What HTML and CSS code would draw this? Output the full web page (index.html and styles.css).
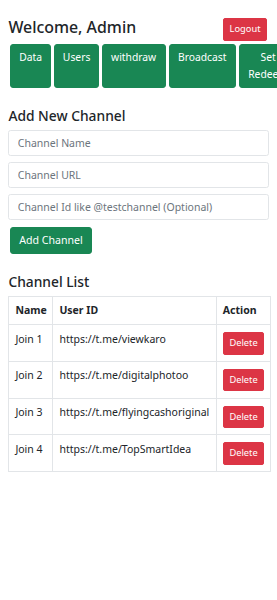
FILE: index.html
```html
<!DOCTYPE html>
<html lang="en">
<head>
  <meta charset="UTF-8" />
  <meta name="viewport" content="width=device-width, initial-scale=1.0">
  <title>Admin Panel</title>
  <link rel="stylesheet" href="styles.css">
</head>
<body>
  <div class="container">
    <div class="topbar">
      <h4 class="welcome">Welcome, Admin</h4>
      <a href="#" class="btn btn-danger btn-sm">Logout</a>
    </div>

    <div class="nav-buttons">
      <a href="#" class="btn btn-success">Data</a>
      <a href="#" class="btn btn-success btn-users">Users</a>
      <a href="#" class="btn btn-success">withdraw</a>
      <a href="#" class="btn btn-success">Broadcast</a>
      <a href="#" class="btn btn-success">Set Redeem</a>
    </div>

    <h5 class="section-title first">Add New Channel</h5>
    <form class="channel-form" onsubmit="return false;">
      <input type="text" class="form-control" placeholder="Channel Name">
      <input type="text" class="form-control" placeholder="Channel URL">
      <input type="text" class="form-control" placeholder="Channel Id like @testchannel (Optional)">
      <div>
        <button type="submit" class="btn btn-success add-btn">Add Channel</button>
      </div>
    </form>

    <h5 class="section-title">Channel List</h5>
    <table class="table">
      <colgroup>
        <col class="col-name">
        <col class="col-url">
        <col class="col-action">
      </colgroup>
      <thead>
        <tr>
          <th>Name</th>
          <th>User ID</th>
          <th>Action</th>
        </tr>
      </thead>
      <tbody>
        <tr>
          <td>Join 1</td>
          <td>https://t.me/viewkaro</td>
          <td><button class="btn btn-danger btn-sm">Delete</button></td>
        </tr>
        <tr>
          <td>Join 2</td>
          <td>https://t.me/digitalphotoo</td>
          <td><button class="btn btn-danger btn-sm">Delete</button></td>
        </tr>
        <tr>
          <td>Join 3</td>
          <td>https://t.me/flyingcashoriginal</td>
          <td><button class="btn btn-danger btn-sm">Delete</button></td>
        </tr>
        <tr>
          <td>Join 4</td>
          <td>https://t.me/TopSmartIdea</td>
          <td><button class="btn btn-danger btn-sm">Delete</button></td>
        </tr>
      </tbody>
    </table>
  </div>
</body>
</html>
```

FILE: styles.css
```css
:root {
  --text: #212529;
  --success: #198754;
  --danger: #dc3545;
  --border: #e2e5e8;
  --muted: #6c757d;
}

* {
  margin: 0;
  padding: 0;
  box-sizing: border-box;
}

body {
  font-family: "Noto Sans", "Open Sans", sans-serif;
  font-size: 10.5px;
  line-height: 16.8px;
  color: var(--text);
  background: #fff;
  overflow-x: hidden;
}

.container {
  padding: 16.8px 8.4px 20px;
}

.topbar {
  display: flex;
  justify-content: space-between;
  align-items: flex-start;
}

.welcome {
  font-size: 15.9px;
  line-height: 18px;
  font-weight: 500;
  margin-top: 1.5px;
}

.btn {
  display: inline-block;
  margin: 1.5px;
  padding: 4.1px 8.4px;
  font-family: inherit;
  font-size: 10.5px;
  line-height: 16.8px;
  color: #fff;
  text-align: center;
  text-decoration: none;
  border: 0.7px solid transparent;
  border-radius: 3px;
  cursor: pointer;
}

.btn-success {
  background: var(--success);
  border-color: var(--success);
}

.btn-danger {
  background: var(--danger);
  border-color: var(--danger);
}

.btn-sm {
  padding: 2.8px 5.6px;
  font-size: 9.3px;
  line-height: 14.7px;
  border-radius: 2px;
}

.nav-buttons {
  display: flex;
  margin-top: 0.3px;
}

.nav-buttons .btn {
  font-size: 10.3px;
  line-height: 17px;
  padding: 4.3px 8.4px;
}

.nav-buttons .btn-users {
  padding: 4.3px 7.4px;
}

.section-title {
  font-size: 13.8px;
  line-height: 16.5px;
  font-weight: 500;
  margin-top: 18.3px;
  margin-bottom: 5.7px;
}

.channel-form {
  display: flex;
  flex-direction: column;
  gap: 6px;
}

.form-control {
  display: block;
  width: 100%;
  height: 26px;
  padding: 4px 8.4px;
  font-family: inherit;
  font-size: 10.5px;
  line-height: 16.8px;
  color: var(--text);
  border: 1px solid var(--border);
  border-radius: 2.6px;
  outline: none;
}

.form-control::placeholder {
  color: var(--muted);
}

.add-btn {
  margin-top: 0.5px;
  font-size: 10.6px;
}

.section-title + .table {
  margin-top: 0.4px;
}

.table {
  table-layout: fixed;
  width: 261.7px;
  border-collapse: collapse;
}

.col-name { width: 44px; }
.col-url { width: 163.4px; }
.col-action { width: 54.3px; }

.table th,
.table td {
  border: 1px solid var(--border);
  padding: 5.3px 6px;
  text-align: left;
  vertical-align: top;
  white-space: nowrap;
}

.table th {
  font-weight: 700;
}

.table td .btn {
  display: block;
  margin: 1.8px 0 1px;
}
```
